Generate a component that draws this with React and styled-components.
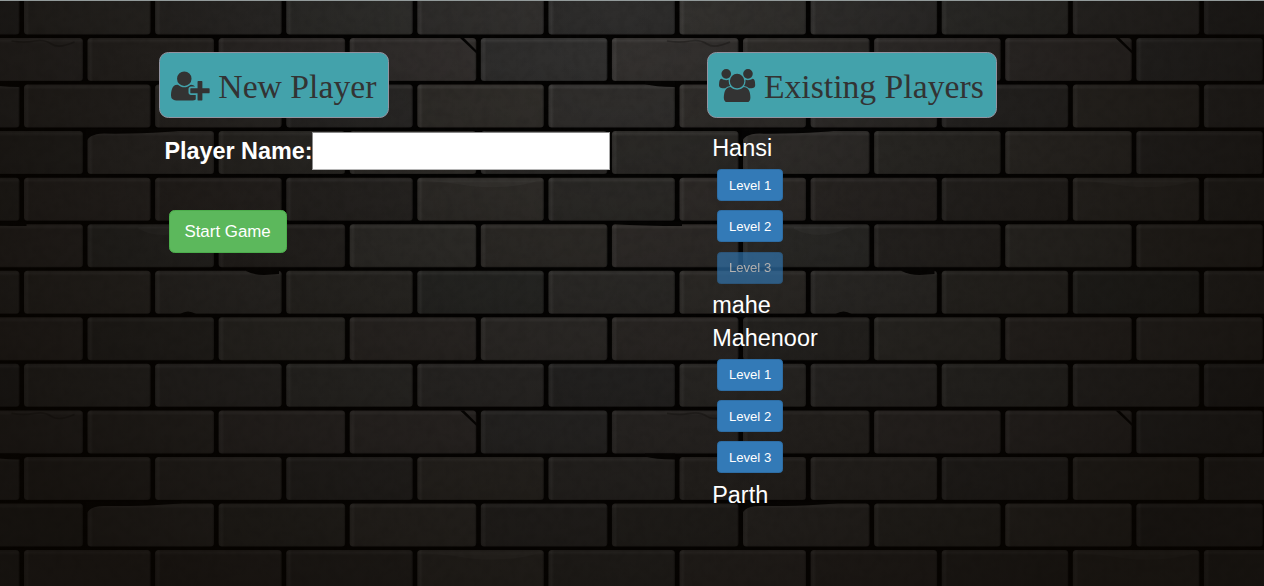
import React from "react";
import styled, { createGlobalStyle } from "styled-components";

const GlobalStyle = createGlobalStyle`
  *, *::before, *::after { box-sizing: border-box; }
  html, body { margin: 0; background: #070604; }
  body { font-family: "Liberation Sans", Arial, sans-serif; color: #fff; overflow: hidden; }
`;

const Page = styled.div`
  display: grid;
  width: 1264px;
  height: 586px;
  overflow: hidden;
  border-top: 1px solid #939b9b;
`;

const WallSvg = styled.svg`
  grid-area: 1 / 1;
  display: block;
  width: 1264px;
  height: 585px;
`;

const Content = styled.main`
  grid-area: 1 / 1;
  z-index: 1;
  display: grid;
  grid-template-columns: 548px 1fr;
  align-items: start;
  padding: 51px 0 0 159px;
`;

const Column = styled.section`
  display: flex;
  flex-direction: column;
  align-items: flex-start;
`;

const Title = styled.h1`
  display: flex;
  align-items: center;
  gap: 8.4px;
  width: ${(p) => p.$width}px;
  height: 66px;
  margin: 0;
  padding: 0 0 0 11.3px;
  border: 1px solid #9293a0;
  border-radius: 9.4px;
  background: #43a2ab;
  color: #333;
  font: 400 33.7px/48px "Liberation Serif", "Times New Roman", serif;
  white-space: nowrap;

  svg { display: block; height: 33.8px; margin-top: 0.8px; fill: currentColor; flex: none; }
  span { padding-top: 3px; }
`;

const Field = styled.label`
  display: flex;
  align-items: center;
  margin: 14px 0 0 5.4px;
  font-size: 23.4px;
  font-weight: 700;
  line-height: 38px;
  white-space: nowrap;
`;

const NameInput = styled.input`
  width: 298px;
  height: 38px;
  margin: 0 0 0 -0.8px;
  padding: 2px 6px;
  border: 1px solid;
  border-color: #8a8a8a #a9a9a9 #b5b5b5 #8a8a8a;
  border-radius: 0;
  outline: 0;
  background: #fff;
  color: #222;
  font: 400 23.45px "Liberation Sans", Arial, sans-serif;
`;

const Button = styled.button`
  display: block;
  border: 1px solid;
  color: #fff;
  font-family: inherit;
  font-weight: 400;
  text-align: center;
  white-space: nowrap;
`;

const StartButton = styled(Button)`
  width: 118px;
  height: 43.2px;
  margin: 39.6px 0 0 9.6px;
  padding: 1px 0 0;
  border-color: #4cae4c;
  border-radius: 5.6px;
  background: #5cb85c;
  font-size: 16.9px;
`;

const LevelButton = styled(Button)`
  width: 66.4px;
  height: 31.9px;
  margin: 4.7px;
  padding: 0;
  border-color: #2e6da4;
  border-radius: 3.75px;
  background: #337ab7;
  font-size: 13.14px;

  &:disabled { opacity: 0.65; }
`;

const PlayerList = styled.div`
  padding: 13.4px 0 0 5.2px;
`;

const PlayerName = styled.div`
  height: 33px;
  font-size: 23.45px;
  line-height: 34.4px;
`;

const Levels = styled.div`
  display: flex;
  flex-direction: column;
`;

function UserPlusIcon() {
  return (
    <svg viewBox="0 0 2048 1792" aria-hidden="true">
      <path d="M704 896q-159 0-271.5-112.5t-112.5-271.5 112.5-271.5 271.5-112.5 271.5 112.5 112.5 271.5-112.5 271.5-271.5 112.5zm960 128h352q13 0 22.5 9.5t9.5 22.5v192q0 13-9.5 22.5t-22.5 9.5h-352v352q0 13-9.5 22.5t-22.5 9.5h-192q-13 0-22.5-9.5t-9.5-22.5v-352h-352q-13 0-22.5-9.5t-9.5-22.5v-192q0-13 9.5-22.5t22.5-9.5h352v-352q0-13 9.5-22.5t22.5-9.5h192q13 0 22.5 9.5t9.5 22.5v352zm-736 224q0 52 38 90t90 38h256v238q-68 50-171 50h-874q-121 0-194-69t-73-190q0-53 3.5-103.5t14-109 26.5-108.5 43-97.5 62-81 85.5-53.5 111.5-20q19 0 39 17 79 61 154.5 91.5t164.5 30.5 164.5-30.5 154.5-91.5q20-17 39-17 132 0 217 96h-223q-52 0-90 38t-38 90v192z" />
    </svg>
  );
}

function UsersIcon() {
  return (
    <svg viewBox="0 0 1920 1792" aria-hidden="true">
      <path d="M593 896q-162 5-265 128h-134q-82 0-138-40.5t-56-118.5q0-353 124-353 6 0 43.5 21t97.5 42.5 119 21.5q67 0 133-23-5 37-5 66 0 139 81 256zm1071 637q0 120-73 189.5t-194 69.5h-874q-121 0-194-69.5t-73-189.5q0-53 3.5-103.5t14-109 26.5-108.5 43-97.5 62-81 85.5-53.5 111.5-20q10 0 43 21.5t73 48 107 48 135 21.5 135-21.5 107-48 73-48 43-21.5q61 0 111.5 20t85.5 53.5 62 81 43 97.5 26.5 108.5 14 109 3.5 103.5zm-1024-1277q0 106-75 181t-181 75-181-75-75-181 75-181 181-75 181 75 75 181zm704 384q0 159-112.5 271.5t-271.5 112.5-271.5-112.5-112.5-271.5 112.5-271.5 271.5-112.5 271.5 112.5 112.5 271.5zm576 225q0 78-56 118.5t-138 40.5h-134q-103-123-265-128 81-117 81-256 0-29-5-66 66 23 133 23 59 0 119-21.5t97.5-42.5 43.5-21q124 0 124 353zm-128-609q0 106-75 181t-181 75-181-75-75-181 75-181 181-75 181 75 75 181z" />
    </svg>
  );
}

const PITCH_X = 131.1;
const PITCH_Y = 46.55;
const BRICK_W = 126.5;
const BRICK_H = 43;

// Brick shades repeat every five columns and eight rows.
const SHADES = [
  ["#353330", "#343230", "#353431", "#343230", "#2e2d2c"],
  ["#33302d", "#363230", "#373331", "#323130", "#353230"],
  ["#322f2c", "#34312e", "#2f2d2b", "#34312d", "#32302e"],
  ["#35322f", "#32302c", "#36332f", "#2f2d2b", "#2e2c29"],
  ["#332f2c", "#2f2b28", "#2d2a27", "#34312d", "#2f2d2a"],
  ["#32312e", "#2e2b28", "#363430", "#33302c", "#34302d"],
  ["#35322e", "#353330", "#32302c", "#2d2d2a", "#33312e"],
  ["#2f2d2a", "#35332f", "#34302d", "#363330", "#34302d"],
];

// Chips, cracks and stains, in the coordinates of one repeat of the wall.
const DAMAGE = [
  [460, 38, "M0 0L4 0L17 13V16Z", "crack"],
  [645, 84, "M0 0Q10 3 30 3V-3H0Z", "chip"],
  [87, 131, "M-1 13Q0 3 17 2.6Q50 3 78 1Q95 0 105 -2H-1Z", "chip"],
  [246, 270, "M0 1Q8 5 18 5L33 4V-2H0Z", "chip"],
  [180, 314, "M0 0Q8 -5 16 0Z", "chip"],
  [655, 40, "M12 1Q25 3 35 1T52 4T75 2", "stain"],
  [418, 181, "M6 0Q30 1 52 5Q90 9 120 0Z", "light"],
  [614, 224, "M0 0Q30 2 68 2V-2H0Z", "chip"],
  [792, 227, "M2 2Q22 12 46 5L58 0H2Z", "light"],
];

function Wall() {
  const bricks = [];
  for (let r = 0; r < 13; r++) {
    for (let c = -1; c < 10; c++) {
      const x = (r % 2 ? 87.5 : 24) + c * PITCH_X;
      const y = 38 + (r - 1) * PITCH_Y;
      bricks.push(
        <g key={`${r}-${c}`} transform={`translate(${x} ${y})`}>
          <rect width={BRICK_W} height={BRICK_H} rx="3.5" fill={SHADES[r % 8][(c + 5) % 5]} />
          <rect width={BRICK_W} height={BRICK_H} rx="3.5" fill="url(#topEdge)" />
          <rect width={BRICK_W} height={BRICK_H} rx="3.5" fill="url(#sideEdge)" />
        </g>
      );
    }
  }
  const marks = [];
  for (let i = -1; i < 2; i++) {
    for (let j = 0; j < 2; j++) {
      DAMAGE.forEach(([x, y, d, kind], n) => {
        marks.push(
          <path
            key={`${i}-${j}-${n}`}
            d={d}
            transform={`translate(${x + i * PITCH_X * 5} ${y + j * PITCH_Y * 8})`}
            fill={kind === "stain" ? "none" : kind === "light" ? "#fff" : "#060504"}
            fillOpacity={kind === "light" ? 0.035 : 1}
            stroke={kind === "stain" ? "#191714" : "none"}
            strokeWidth="1.6"
            strokeOpacity="0.45"
          />
        );
      });
    }
  }
  return (
    <WallSvg viewBox="0 1 1264 585" aria-hidden="true">
      <defs>
        <linearGradient id="topEdge" x2="0" y2="1">
          <stop offset="0" stopColor="#fff" stopOpacity="0.01" />
          <stop offset="0.06" stopColor="#fff" stopOpacity="0.06" />
          <stop offset="0.12" stopColor="#fff" stopOpacity="0" />
          <stop offset="0.97" stopColor="#000" stopOpacity="0.02" />
          <stop offset="1" stopColor="#000" stopOpacity="0.25" />
        </linearGradient>
        <linearGradient id="sideEdge">
          <stop offset="0" stopColor="#fff" stopOpacity="0.01" />
          <stop offset="0.025" stopColor="#fff" stopOpacity="0.055" />
          <stop offset="0.045" stopColor="#fff" stopOpacity="0" />
          <stop offset="0.985" stopColor="#000" stopOpacity="0" />
          <stop offset="1" stopColor="#000" stopOpacity="0.3" />
        </linearGradient>
        <radialGradient id="light" gradientUnits="userSpaceOnUse" cx="0" cy="0" r="1" gradientTransform="translate(620 10) scale(750 740)">
          <stop offset="0" stopColor="#000" stopOpacity="0.02" />
          <stop offset="0.3" stopColor="#000" stopOpacity="0.18" />
          <stop offset="0.6" stopColor="#060300" stopOpacity="0.4" />
          <stop offset="1" stopColor="#080400" stopOpacity="0.66" />
        </radialGradient>
        <filter id="grain" x="0" y="0" width="100%" height="100%">
          <feTurbulence type="fractalNoise" baseFrequency="0.11" numOctaves="3" seed="4" />
          <feColorMatrix values="0 0 0 0 0  0 0 0 0 0  0 0 0 0 0  0.9 0 0 0 -0.38" />
        </filter>
      </defs>
      <rect width="1264" height="586" fill="#040302" />
      {bricks}
      {marks}
      <rect width="1264" height="586" filter="url(#grain)" opacity="0.16" />
      <rect width="1264" height="586" fill="url(#light)" />
    </WallSvg>
  );
}

const PLAYERS = [
  { name: "Hansi", levels: [true, true, false] },
  { name: "mahe", levels: [] },
  { name: "Mahenoor", levels: [true, true, true] },
  { name: "Parth", levels: [] },
];

export default function App() {
  return (
    <>
      <GlobalStyle />
      <Page>
        <Wall />
        <Content>
          <Column>
            <Title $width={230}>
              <UserPlusIcon />
              <span>New Player</span>
            </Title>
            <Field>
              Player Name:
              <NameInput type="text" />
            </Field>
            <StartButton type="button">Start Game</StartButton>
          </Column>
          <Column>
            <Title $width={290}>
              <UsersIcon />
              <span>Existing Players</span>
            </Title>
            <PlayerList>
              {PLAYERS.map((player) => (
                <React.Fragment key={player.name}>
                  <PlayerName>{player.name}</PlayerName>
                  <Levels>
                    {player.levels.map((open, i) => (
                      <LevelButton key={i} type="button" disabled={!open}>
                        Level {i + 1}
                      </LevelButton>
                    ))}
                  </Levels>
                </React.Fragment>
              ))}
            </PlayerList>
          </Column>
        </Content>
      </Page>
    </>
  );
}
